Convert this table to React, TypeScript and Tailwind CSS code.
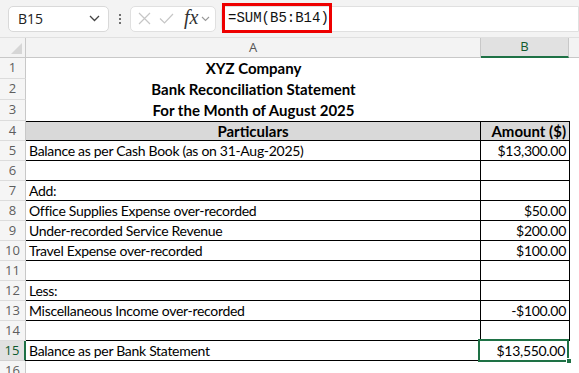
import React from "react";

type Row = { n: number; a: string; b: string; kind?: "title" | "head" | "data" };

const rows: Row[] = [
  { n: 4, a: "Particulars", b: "Amount ($)", kind: "head" },
  { n: 5, a: "Balance as per Cash Book (as on 31-Aug-2025)", b: "$13,300.00" },
  { n: 6, a: "", b: "" },
  { n: 7, a: "Add:", b: "" },
  { n: 8, a: "Office Supplies Expense over-recorded", b: "$50.00" },
  { n: 9, a: "Under-recorded Service Revenue", b: "$200.00" },
  { n: 10, a: "Travel Expense over-recorded", b: "$100.00" },
  { n: 11, a: "", b: "" },
  { n: 12, a: "Less:", b: "" },
  { n: 13, a: "Miscellaneous Income over-recorded", b: "-$100.00" },
  { n: 14, a: "", b: "" },
  { n: 15, a: "Balance as per Bank Statement", b: "$13,550.00" },
];

const titles = ["XYZ Company", "Bank Reconciliation Statement", "For the Month of August 2025"];

function RowHead({ n, sel, h }: { n: number; sel?: boolean; h: string }) {
  return (
    <div
      className={`${h} w-[26px] shrink-0 flex items-center justify-center border-r border-b text-[13px] font-['Open_Sans',sans-serif] ${
        sel
          ? "bg-[#e1e1e1] text-[#0f5a2e] border-r-[#1e7145] border-r-2 border-b-[#d0d0d0]"
          : "bg-[#f5f5f5] text-[#5e5e5e] border-r-[#c8c8c8] border-b-[#dcdcdc]"
      }`}
    >
      {n}
    </div>
  );
}

export default function App() {
  return (
    <div className="w-[579px] h-[373px] overflow-hidden bg-white font-['Lato',sans-serif] text-black">
      {/* Formula bar */}
      <div className="relative h-[38px] bg-[#f3f3f3] flex items-center border-b border-[#e0e0e0]">
        <div className="ml-[8px] w-[101px] h-[26px] bg-white border border-[#d9d9d9] rounded-[5px] flex items-center justify-between pl-[9px] pr-[8px] text-[14px] font-['Open_Sans',sans-serif] text-[#222]">
          <span>B15</span>
          <svg width="11" height="7" viewBox="0 0 11 7" fill="none" stroke="#444" strokeWidth="1.3">
            <path d="M1 1l4.5 4.5L10 1" />
          </svg>
        </div>
        <div className="w-[21px] flex flex-col items-center justify-center gap-[2px]">
          <span className="w-[2px] h-[2px] bg-[#444] rounded-full" />
          <span className="w-[2px] h-[2px] bg-[#444] rounded-full" />
          <span className="w-[2px] h-[2px] bg-[#444] rounded-full" />
        </div>
        <div className="w-[86px] h-[26px] bg-white border border-[#e0e0e0] rounded-[5px] flex items-center pl-[7px]">
          <svg width="13" height="13" viewBox="0 0 13 13" stroke="#c6c6c6" strokeWidth="1.2" fill="none">
            <path d="M1 1l11 11M12 1L1 12" />
          </svg>
          <svg className="ml-[8px]" width="15" height="11" viewBox="0 0 15 11" stroke="#c6c6c6" strokeWidth="1.2" fill="none">
            <path d="M1 5.5l4.5 4.5L14 1" />
          </svg>
          <span className="ml-[10px] text-[20px] italic font-['Liberation_Serif',serif] text-[#333] leading-none -mt-[3px]">fx</span>
          <svg className="ml-[3px]" width="9" height="6" viewBox="0 0 9 6" fill="none" stroke="#999" strokeWidth="1.1">
            <path d="M1 1l3.5 3.5L8 1" />
          </svg>
        </div>
        <div className="ml-[5px] flex-1 h-[26px] bg-white border border-[#e0e0e0] rounded-l-[5px] flex items-center pl-[6px] text-[14px] font-['Liberation_Mono',monospace] text-[#111]">
          =SUM(B5:B14)
        </div>
        <div className="absolute left-[222px] top-[3px] w-[110px] h-[30px] border-[3px] border-[#ee0000]" />
      </div>

      {/* Column headers */}
      <div className="flex h-[20px] bg-[#f3f3f3] text-[13px] font-['Open_Sans',sans-serif] text-[#555]">
        <div className="relative w-[26px] shrink-0 border-r border-b border-[#c8c8c8]">
          <svg className="absolute right-[3px] bottom-[3px]" width="11" height="11" viewBox="0 0 11 11">
            <path d="M11 0L11 11L0 11Z" fill="#d6d6d6" />
          </svg>
        </div>
        <div className="w-[455px] shrink-0 flex items-center justify-center border-r border-b border-[#c8c8c8]">A</div>
        <div className="w-[88px] shrink-0 flex items-center justify-center bg-[#e1e1e1] border-r border-r-[#c8c8c8] border-b-2 border-b-[#1e7145] text-[#0f5a2e]">
          B
        </div>
        <div className="flex-1 border-b border-[#c8c8c8]" />
      </div>

      {/* Title rows */}
      {titles.map((t, i) => (
        <div key={t} className="flex h-[21px]">
          <RowHead n={i + 1} h="h-[21px]" />
          <div className="w-[455px] shrink-0 flex items-center justify-center font-bold text-[15px]">{t}</div>
        </div>
      ))}

      {/* Bordered table */}
      <div className="flex flex-col">
        {rows.map((r, i) => {
          const head = r.kind === "head";
          const sel = r.n === 15;
          return (
            <div key={r.n} className="flex h-[20px]">
              <RowHead n={r.n} sel={sel} h="h-[20px]" />
              <div
                className={`w-[455px] shrink-0 h-[20px] border-r border-b border-black flex items-center leading-none ${
                  i === 0 ? "border-t" : ""
                } ${
                  head
                    ? "bg-[#d9d9d9] justify-center font-bold text-[15px]"
                    : "pl-[3px] text-[14px] tracking-[-0.3px]"
                } ${sel ? "-ml-[1px] pl-[4px]" : ""}`}
              >
                {r.a}
              </div>
              <div
                className={`relative w-[89px] shrink-0 h-[20px] border-r border-b border-black flex items-center justify-end pr-[3px] leading-none ${
                  i === 0 ? "border-t" : ""
                } ${head ? "bg-[#d9d9d9] font-bold text-[15px]" : "text-[14px] tracking-[-0.3px]"}`}
              >
                {r.b}
                {sel && (
                  <>
                    <div className="absolute -left-[2px] -top-[2px] -right-[1px] -bottom-[2px] border-2 border-[#1e7145]" />
                    <div className="absolute -right-[4px] -bottom-[4px] w-[6px] h-[6px] bg-[#1e7145] border border-white" />
                  </>
                )}
              </div>
            </div>
          );
        })}
        <div className="flex h-[20px]">
          <RowHead n={16} h="h-[20px]" />
        </div>
      </div>
    </div>
  );
}
